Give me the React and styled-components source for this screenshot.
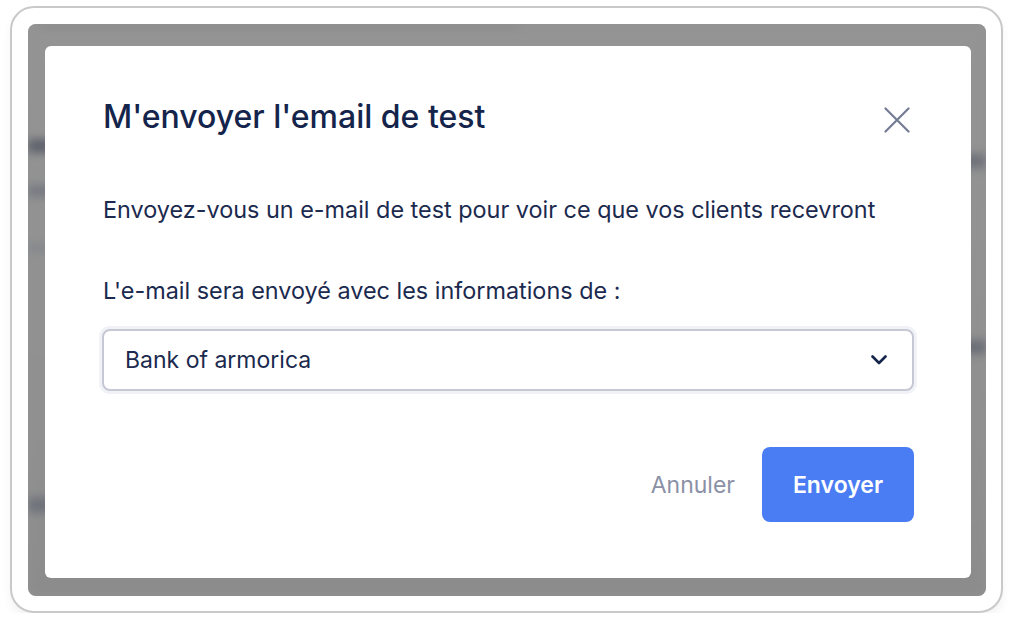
import React from "react";
import styled, { createGlobalStyle } from "styled-components";

const GlobalStyle = createGlobalStyle`
  html, body {
    margin: 0;
    padding: 0;
    background: #ffffff;
  }
  body {
    font-family: Inter, "Noto Sans", "Liberation Sans", sans-serif;
    -webkit-font-smoothing: antialiased;
  }
`;

const Frame = styled.div`
  box-sizing: border-box;
  width: 993px;
  height: 607px;
  margin: 6px 0 0 10px;
  padding: 16px 15px 15px 16px;
  border: 2px solid #c9c9c9;
  border-radius: 24px;
  background: #ffffff;
  box-shadow: 0 6px 10px rgba(0, 0, 0, 0.05);
`;

const Backdrop = styled.div`
  position: relative;
  height: 100%;
  border-radius: 8px;
  overflow: hidden;
  background: #939393;
`;

const BlurredPage = styled.div`
  display: flex;
  flex-direction: column;
  height: 100%;
  filter: blur(4px);
  background: linear-gradient(to bottom, #949494 0%, #909090 70%, #8c8c8c 100%);
`;

const PageLine = styled.div`
  display: flex;
  margin-top: ${(p) => p.$top}px;
  height: ${(p) => p.$h}px;
`;

const PageBlob = styled.div`
  width: ${(p) => p.$w}px;
  height: 100%;
  margin-left: ${(p) => p.$offset || 0}px;
  background: ${(p) => p.$tone};
`;

const RightColumn = styled.div`
  position: absolute;
  top: 0;
  right: 0;
  width: 40px;
  height: 100%;
  display: flex;
  flex-direction: column;
  filter: blur(4px);
`;

const Modal = styled.div`
  position: absolute;
  top: 22px;
  left: 17px;
  right: 15px;
  bottom: 18px;
  box-sizing: border-box;
  display: flex;
  flex-direction: column;
  padding: 51px 57px 0 57px;
  background: #ffffff;
  border-radius: 6px;
`;

const Header = styled.div`
  display: flex;
  align-items: center;
  justify-content: space-between;
`;

const Title = styled.h2`
  margin: 0 0 0 1px;
  font-size: 32px;
  line-height: 40px;
  font-weight: 500;
  color: #14244b;
`;

const CloseButton = styled.button`
  display: flex;
  align-items: center;
  justify-content: center;
  width: 26px;
  height: 26px;
  margin: 5px 4px 0 0;
  padding: 0;
  border: none;
  background: none;
  cursor: pointer;
`;

const Text = styled.p`
  margin: ${(p) => p.$top}px 0 0 1px;
  font-size: 23.4px;
  line-height: 28px;
  font-weight: 400;
  color: #1b2a4e;
`;

const Select = styled.div`
  box-sizing: border-box;
  display: flex;
  align-items: center;
  justify-content: space-between;
  height: 62px;
  margin-top: 24px;
  padding: 0 25px 0 21px;
  border: 2px solid #c6c9d4;
  border-radius: 8px;
  background: #ffffff;
  box-shadow: 0 0 0 3px #f1f2f5;
  font-size: 23px;
  color: #1b2a4e;
`;

const Footer = styled.div`
  display: flex;
  align-items: center;
  justify-content: flex-end;
  gap: 27px;
  margin-top: 56px;
`;

const GhostButton = styled.button`
  padding: 0;
  border: none;
  background: none;
  font-family: inherit;
  font-size: 23px;
  font-weight: 400;
  color: #8b91a5;
  cursor: pointer;
`;

const PrimaryButton = styled.button`
  width: 152px;
  height: 75px;
  border: none;
  border-radius: 8px;
  background: #4a7cf4;
  font-family: inherit;
  font-size: 23px;
  font-weight: 600;
  color: #ffffff;
  cursor: pointer;
`;

const blobsLeft = [
  { top: 110, h: 14, tone: "#5f636d" },
  { top: 32, h: 12, tone: "#777a82" },
  { top: 46, h: 10, tone: "#86888d" },
  { top: 244, h: 16, tone: "#70737b" },
];

const blobsRight = [
  { top: 130, h: 14, tone: "#6f727a" },
  { top: 172, h: 14, tone: "#6b6e77" },
];

const App = () => {
  return (
    <>
      <GlobalStyle />
      <Frame>
        <Backdrop>
          <BlurredPage>
            <PageLine $top={0} $h={5}>
              <PageBlob $w={480} $offset={12} $tone="#8a8a8c" />
            </PageLine>
            {blobsLeft.map((b, i) => (
              <PageLine key={i} $top={b.top} $h={b.h}>
                <PageBlob $w={40} $tone={b.tone} />
              </PageLine>
            ))}
          </BlurredPage>
          <RightColumn>
            {blobsRight.map((b, i) => (
              <PageLine key={i} $top={b.top} $h={b.h}>
                <PageBlob $w={40} $tone={b.tone} />
              </PageLine>
            ))}
          </RightColumn>
          <Modal>
            <Header>
              <Title>M'envoyer l'email de test</Title>
              <CloseButton aria-label="Fermer">
                <svg width="26" height="26" viewBox="0 0 26 26">
                  <path
                    d="M1.5 1.5 L24.5 24.5 M24.5 1.5 L1.5 24.5"
                    stroke="#747b93"
                    strokeWidth="2.2"
                    strokeLinecap="round"
                  />
                </svg>
              </CloseButton>
            </Header>
            <Text $top={59}>
              Envoyez-vous un e-mail de test pour voir ce que vos clients recevront
            </Text>
            <Text $top={53}>L'e-mail sera envoyé avec les informations de :</Text>
            <Select>
              <span>Bank of armorica</span>
              <svg width="16" height="10" viewBox="0 0 16 10">
                <path
                  d="M1.5 1.5 L8 8 L14.5 1.5"
                  stroke="#14244b"
                  strokeWidth="2.6"
                  fill="none"
                  strokeLinecap="round"
                  strokeLinejoin="round"
                />
              </svg>
            </Select>
            <Footer>
              <GhostButton>Annuler</GhostButton>
              <PrimaryButton>Envoyer</PrimaryButton>
            </Footer>
          </Modal>
        </Backdrop>
      </Frame>
    </>
  );
};

export default App;
